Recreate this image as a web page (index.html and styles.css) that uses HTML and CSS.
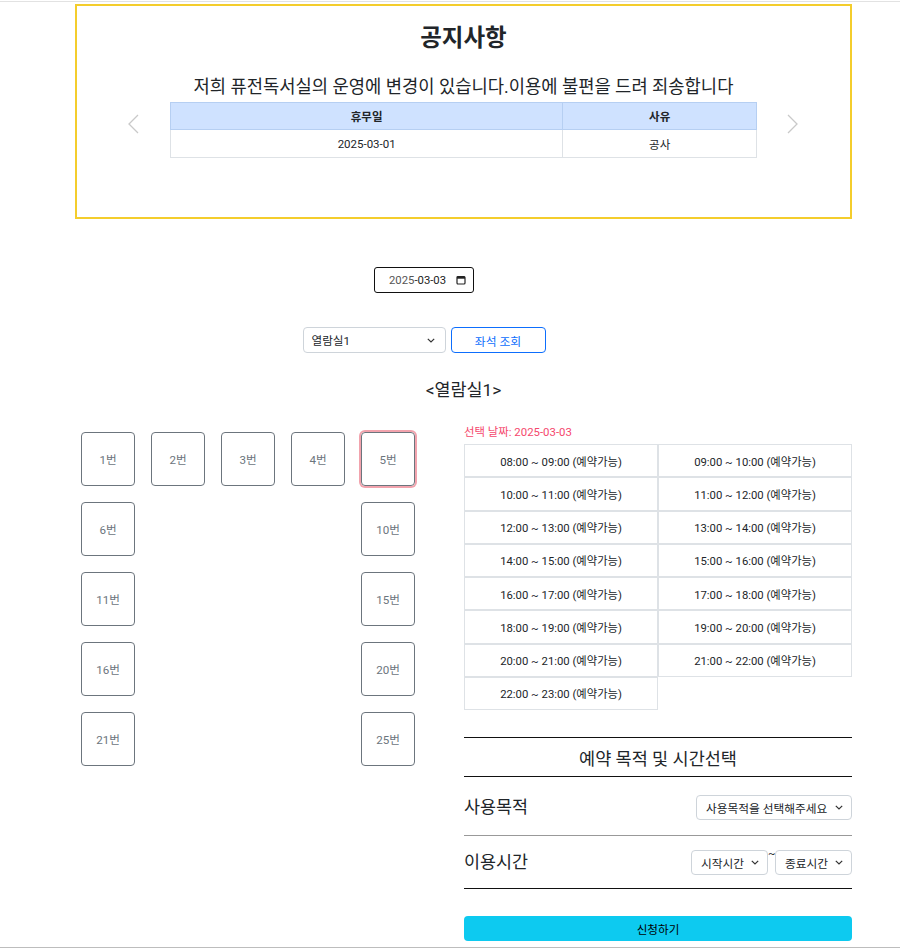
FILE: index.html
```html
<!DOCTYPE html>
<html lang="ko">
<head>
<meta charset="utf-8">
<title>좌석 예약</title>
<link rel="stylesheet" href="styles.css">
</head>
<body>
<div class="topbar"></div>
<div class="container">
  <section class="notice">
    <h3 class="notice-title">공지사항</h3>
    <p class="notice-text">저희 퓨전독서실의 운영에 변경이 있습니다.이용에 불편을 드려 죄송합니다</p>
    <table class="notice-table">
      <thead><tr><th class="c1">휴무일</th><th class="c2">사유</th></tr></thead>
      <tbody><tr><td>2025-03-01</td><td>공사</td></tr></tbody>
    </table>
    <span class="arrow arrow-left"><svg width="12" height="20" viewBox="0 0 12 20"><polyline points="10,1 1,10 10,19" fill="none" stroke="#c9c9c9" stroke-width="1.3"/></svg></span>
    <span class="arrow arrow-right"><svg width="12" height="20" viewBox="0 0 12 20"><polyline points="2,1 11,10 2,19" fill="none" stroke="#c9c9c9" stroke-width="1.3"/></svg></span>
  </section>

  <div class="ctl-row date-row">
    <div class="date-input">
      <span class="date-val"><span class="date-y">2025</span>-03-03</span>
      <svg width="10" height="10" viewBox="0 0 10 10"><rect x="1" y="1.5" width="8" height="7.5" rx="1" fill="none" stroke="#222" stroke-width="1.2"/><rect x="1" y="1.5" width="8" height="2.2" fill="#222"/></svg>
    </div>
  </div>

  <div class="ctl-row select-row">
    <div class="room-select">
      <span>열람실1</span>
      <svg class="chev" width="8" height="5" viewBox="0 0 8 5"><polyline points="0.8,0.8 4,4 7.2,0.8" fill="none" stroke="#333" stroke-width="1.2"/></svg>
    </div>
    <div class="btn-outline">좌석 조회</div>
  </div>

  <div class="room-title">&lt;열람실1&gt;</div>

  <div class="main">
    <div class="left">
      <div class="seats">
        <div class="seat">1번</div>
        <div class="seat">2번</div>
        <div class="seat">3번</div>
        <div class="seat">4번</div>
        <div class="seat seat-active">5번</div>
        <div class="seat c-first">6번</div>
        <div class="seat c-last">10번</div>
        <div class="seat c-first">11번</div>
        <div class="seat c-last">15번</div>
        <div class="seat c-first">16번</div>
        <div class="seat c-last">20번</div>
        <div class="seat c-first">21번</div>
        <div class="seat c-last">25번</div>
      </div>
    </div>
    <div class="right">
      <div class="sel-date">선택 날짜: 2025-03-03</div>
      <div class="slots">
        <div class="slot">08:00 ~ 09:00 (예약가능)</div>
        <div class="slot">09:00 ~ 10:00 (예약가능)</div>
        <div class="slot">10:00 ~ 11:00 (예약가능)</div>
        <div class="slot">11:00 ~ 12:00 (예약가능)</div>
        <div class="slot">12:00 ~ 13:00 (예약가능)</div>
        <div class="slot">13:00 ~ 14:00 (예약가능)</div>
        <div class="slot">14:00 ~ 15:00 (예약가능)</div>
        <div class="slot">15:00 ~ 16:00 (예약가능)</div>
        <div class="slot">16:00 ~ 17:00 (예약가능)</div>
        <div class="slot">17:00 ~ 18:00 (예약가능)</div>
        <div class="slot">18:00 ~ 19:00 (예약가능)</div>
        <div class="slot">19:00 ~ 20:00 (예약가능)</div>
        <div class="slot">20:00 ~ 21:00 (예약가능)</div>
        <div class="slot">21:00 ~ 22:00 (예약가능)</div>
        <div class="slot">22:00 ~ 23:00 (예약가능)</div>
      </div>

      <div class="form">
        <div class="form-title">예약 목적 및 시간선택</div>
        <div class="form-row row-purpose">
          <span class="form-label">사용목적</span>
          <div class="fsel fsel-purpose">
            <span>사용목적을 선택해주세요</span>
            <svg class="chev" width="8" height="5" viewBox="0 0 8 5"><polyline points="0.8,0.8 4,4 7.2,0.8" fill="none" stroke="#333" stroke-width="1.2"/></svg>
          </div>
        </div>
        <div class="form-row row-time">
          <span class="form-label">이용시간</span>
          <div class="time-sels">
            <div class="fsel fsel-time">
              <span>시작시간</span>
              <svg class="chev" width="8" height="5" viewBox="0 0 8 5"><polyline points="0.8,0.8 4,4 7.2,0.8" fill="none" stroke="#333" stroke-width="1.2"/></svg>
            </div>
            <span class="tilde">~</span>
            <div class="fsel fsel-time">
              <span>종료시간</span>
              <svg class="chev" width="8" height="5" viewBox="0 0 8 5"><polyline points="0.8,0.8 4,4 7.2,0.8" fill="none" stroke="#333" stroke-width="1.2"/></svg>
            </div>
          </div>
        </div>
      </div>
      <div class="submit">신청하기</div>
    </div>
  </div>
</div>
<div class="footer"></div>
</body>
</html>
```

FILE: styles.css
```css
* { box-sizing: border-box; }
html, body { margin: 0; padding: 0; background: #fff; }
body {
  font-family: Roboto, "Noto Sans CJK KR", sans-serif;
  color: #212529;
  font-size: 11.6px;
}
.topbar { height: 2px; border-bottom: 1px solid #e2e2e2; }
.container { margin-left: 75px; width: 777px; }

.notice {
  position: relative;
  margin-top: 2px;
  height: 215px;
  border: 2px solid #f4cd2c;
  padding-top: 17px;
}
.notice-title {
  margin: 0;
  text-align: center;
  font-size: 23.5px;
  line-height: 30px;
  font-weight: 700;
  color: #212529;
}
.notice-text {
  margin: 22px 0 0;
  text-align: center;
  font-size: 17.7px;
  line-height: 24px;
  color: #212529;
}
.notice-table {
  margin: 3px auto 0;
  width: 587px;
  border-collapse: collapse;
  font-size: 11.5px;
}
.notice-table th, .notice-table td {
  text-align: center;
  padding: 0;
}
.notice-table th {
  background: #cfe2ff;
  border: 1px solid #b6cff2;
  height: 27px;
  font-weight: 700;
}
.notice-table td {
  border: 1px solid #dee2e6;
  height: 28px;
  color: #212529;
}
.notice-table .c1 { width: 393px; }
.notice-table .c2 { width: 194px; }
.arrow { position: absolute; top: 108px; line-height: 0; }
.arrow-left { left: 51px; }
.arrow-right { left: 709px; }

.ctl-row {
  display: flex;
  justify-content: center;
  gap: 5px;
  padding-right: 79px;
}
.date-row { margin-top: 48px; }
.date-input {
  width: 100px;
  height: 26px;
  border: 1px solid #111;
  border-radius: 3px;
  display: flex;
  align-items: center;
  justify-content: space-between;
  padding: 0 7px 0 14px;
  font-size: 11.3px;
  color: #222;
}
.date-y { color: #555; }
.select-row { margin-top: 34px; }
.room-select {
  width: 143px;
  height: 26px;
  border: 1px solid #ced4da;
  border-radius: 4px;
  display: flex;
  align-items: center;
  justify-content: space-between;
  padding: 0 10px 0 8px;
  font-size: 11.6px;
}
.btn-outline {
  width: 95px;
  height: 26px;
  border: 1px solid #0d6efd;
  border-radius: 4px;
  color: #0d6efd;
  display: flex;
  align-items: center;
  justify-content: center;
  font-size: 11.8px;
}
.chev { display: block; }

.room-title {
  margin-top: 25px;
  text-align: center;
  font-size: 17.4px;
  line-height: 24px;
  color: #212529;
}

.main {
  margin-top: 22px;
  display: grid;
  grid-template-columns: 389px 388px;
}
.left { padding: 8px 0 0 6px; }
.seats {
  display: grid;
  grid-template-columns: repeat(5, 54px);
  grid-auto-rows: 54px;
  gap: 16px;
}
.seat {
  border: 1px solid #6c757d;
  border-radius: 4px;
  color: #6c757d;
  font-size: 11.6px;
  display: flex;
  align-items: center;
  justify-content: center;
}
.seat-active { box-shadow: 0 0 0 2px #f2a3ad; }
.c-first { grid-column: 1; }
.c-last { grid-column: 5; }

.sel-date {
  font-size: 11.4px;
  line-height: 16px;
  color: #f5476d;
}
.slots {
  margin-top: 4px;
  display: grid;
  grid-template-columns: 194px 194px;
  grid-auto-rows: 33.25px;
}
.slot {
  border: 1px solid #dee2e6;
  display: flex;
  align-items: center;
  justify-content: center;
  font-size: 11.3px;
  color: #212529;
}

.form { margin-top: 27px; }
.form-title {
  border-top: 1px solid #111;
  border-bottom: 1px solid #111;
  height: 40px;
  display: flex;
  align-items: center;
  justify-content: center;
  font-size: 17.5px;
}
.form-row {
  display: flex;
  align-items: center;
  justify-content: space-between;
}
.row-purpose { height: 59px; border-bottom: 1px solid #999; padding-top: 2px; }
.row-time { height: 53px; border-bottom: 1px solid #111; }
.form-label { font-size: 17.4px; line-height: 22px; }
.fsel {
  height: 25px;
  border: 1px solid #ced4da;
  border-radius: 4px;
  display: flex;
  align-items: center;
  justify-content: space-between;
  font-size: 11.7px;
  padding: 0 8px 0 9px;
}
.fsel-purpose { width: 156px; }
.time-sels { display: flex; align-items: flex-start; }
.fsel-time { width: 77px; }
.tilde { width: 7px; font-size: 11px; line-height: 8px; text-align: center; }

.submit {
  margin-top: 27px;
  height: 25px;
  background: #0dcaf0;
  border-radius: 4px;
  display: flex;
  align-items: center;
  justify-content: center;
  font-size: 11.6px;
  color: #000;
}
.footer { margin-top: 6px; border-top: 1px solid #bdbdbd; height: 10px; }
```
